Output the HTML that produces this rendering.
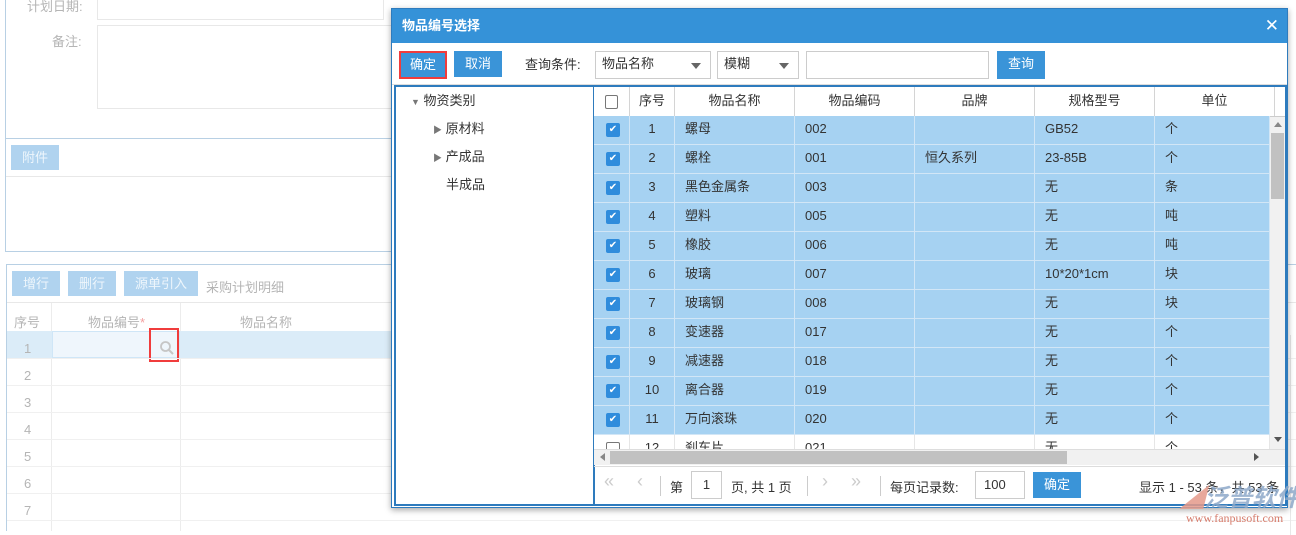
<!DOCTYPE html>
<html><head><meta charset="utf-8"><style>
*{box-sizing:border-box;margin:0;padding:0}
body{width:1296px;height:531px;overflow:hidden;background:#fff;font-family:"Liberation Sans","Noto Sans CJK SC",sans-serif;font-size:13px;color:#333;position:relative}
.a{position:absolute}
.fb{background:#b0d3ef;color:#eef6fc;font-size:13px;text-align:center;line-height:25px}
.lg{color:#b5b5b5}
.hd{position:absolute;top:0;height:29px;line-height:27px;text-align:center;border-right:1px solid #d4d4d4;color:#333}
.row{position:absolute;left:0;width:676px;height:29px;background:#a6d2f2;border-bottom:1px solid #d2e6f6}
.row div{position:absolute;top:0;height:28px;line-height:26px;border-right:1px solid #d2e6f6}
.cb{position:absolute;left:12px;top:7px;width:14px;height:14px;background:#2f8cdc;border-radius:2px;color:#fff;font-size:10px;line-height:14px;text-align:center;font-style:normal}
.btn{position:absolute;background:#3a94d8;color:#fff;text-align:center;line-height:26px;height:26px}
.sel{position:absolute;height:28px;border:1px solid #ccc;background:#fff;line-height:24px;padding-left:6px}
.sel:after{content:"";position:absolute;right:9px;top:11px;border-left:5px solid transparent;border-right:5px solid transparent;border-top:6px solid #666}
</style></head><body>
<div class="a lg" style="left:27px;top:-4px;font-size:13px">计划日期:</div>
<div class="a" style="left:97px;top:-2px;width:287px;height:22px;border:1px solid #e8e8e8"></div>
<div class="a lg" style="left:52px;top:31px">备注:</div>
<div class="a" style="left:97px;top:25px;width:300px;height:84px;border:1px solid #e8e8e8"></div>
<div class="a" style="left:5px;top:0;width:400px;height:252px;border-left:1px solid #b8d0e4;border-bottom:1px solid #b8d0e4"></div>
<div class="a" style="left:5px;top:138px;width:400px;border-top:1px solid #b8d0e4"></div>
<div class="a fb" style="left:11px;top:145px;width:48px">附件</div>
<div class="a" style="left:6px;top:176px;width:400px;border-top:1px solid #e8e8e8"></div>
<div class="a" style="left:6px;top:264px;width:1290px;height:267px;border-top:1px solid #b8d0e4;border-left:1px solid #b8d0e4"></div>
<div class="a fb" style="left:12px;top:271px;width:48px">增行</div>
<div class="a fb" style="left:68px;top:271px;width:48px">删行</div>
<div class="a fb" style="left:124px;top:271px;width:74px">源单引入</div>
<div class="a lg" style="left:206px;top:277px">采购计划明细</div>
<div class="a" style="left:7px;top:302px;width:1290px;border-top:1px solid #e8e8e8"></div>
<div class="a lg" style="left:14px;top:312px">序号</div>
<div class="a lg" style="left:88px;top:312px">物品编号<span style="color:#f3a0a0">*</span></div>
<div class="a lg" style="left:240px;top:312px">物品名称</div>
<div class="a" style="left:51px;top:303px;height:228px;border-left:1px solid #ececec"></div>
<div class="a" style="left:180px;top:303px;height:228px;border-left:1px solid #ececec"></div>
<div class="a" style="left:7px;top:331px;width:390px;height:27px;background:#dbecf8"></div>
<div class="a" style="left:52px;top:331px;width:128px;height:27px;background:#eff6fc;border:1px solid #cfe6f7"></div>
<div class="a" style="left:149px;top:328px;width:30px;height:34px;border:2px solid #f03c3c"></div>
<svg class="a" style="left:159px;top:340px" width="16" height="16"><circle cx="6.5" cy="6.5" r="4.5" fill="none" stroke="#c6c6c6" stroke-width="1.8"/><line x1="10" y1="10" x2="14" y2="14" stroke="#c6c6c6" stroke-width="2"/></svg>
<div class="a lg" style="left:24px;top:341px">1</div>
<div class="a lg" style="left:24px;top:368px">2</div>
<div class="a lg" style="left:24px;top:395px">3</div>
<div class="a lg" style="left:24px;top:422px">4</div>
<div class="a lg" style="left:24px;top:449px">5</div>
<div class="a lg" style="left:24px;top:476px">6</div>
<div class="a lg" style="left:24px;top:503px">7</div>
<div class="a" style="left:7px;top:358px;width:1290px;border-top:1px solid #f0f0f0"></div>
<div class="a" style="left:7px;top:385px;width:1290px;border-top:1px solid #f0f0f0"></div>
<div class="a" style="left:7px;top:412px;width:1290px;border-top:1px solid #f0f0f0"></div>
<div class="a" style="left:7px;top:439px;width:1290px;border-top:1px solid #f0f0f0"></div>
<div class="a" style="left:7px;top:466px;width:1290px;border-top:1px solid #f0f0f0"></div>
<div class="a" style="left:7px;top:493px;width:1290px;border-top:1px solid #f0f0f0"></div>
<div class="a" style="left:7px;top:520px;width:1290px;border-top:1px solid #f0f0f0"></div>
<div class="a" style="left:1290px;top:335px;height:200px;border-left:1px solid #e8e8e8"></div>

<div class="a" style="left:391px;top:8px;width:897px;height:500px;background:#fff;border:1px solid #2e7bbd;box-shadow:0 2px 6px rgba(0,0,0,.35)">
 <div class="a" style="left:0;top:0;width:895px;height:34px;background:#3592d8;color:#fff;font-weight:bold;line-height:33px;padding-left:10px;font-size:13px">物品编号选择<span style="position:absolute;right:8px;top:0;font-weight:normal;font-size:17px">✕</span></div>
 <div class="btn" style="left:7px;top:42px;width:48px;height:28px;border:2px solid #f03c3c;line-height:24px">确定</div>
 <div class="btn" style="left:62px;top:42px;width:48px">取消</div>
 <div class="a" style="left:133px;top:45px">查询条件:</div>
 <div class="sel" style="left:203px;top:42px;width:116px">物品名称</div>
 <div class="sel" style="left:325px;top:42px;width:82px">模糊</div>
 <div class="a" style="left:414px;top:42px;width:183px;height:28px;border:1px solid #ccc"></div>
 <div class="btn" style="left:605px;top:42px;width:48px;height:28px;line-height:26px">查询</div>
 <div class="a" style="left:0;top:75px;width:895px;border-top:1px solid #ddd"></div>
 <div class="a" style="left:2px;top:76px;width:201px;height:421px;border:2px solid #2e7bbd"></div>
 <div class="a" style="left:19px;top:81px"><span style="font-size:9px;color:#777">▼</span> 物资类别</div>
 <div class="a" style="left:41px;top:109px"><span style="font-size:9px;color:#777">▶</span> 原材料</div>
 <div class="a" style="left:41px;top:137px"><span style="font-size:9px;color:#777">▶</span> 产成品</div>
 <div class="a" style="left:54px;top:165px">半成品</div>
 <div class="a" style="left:202px;top:76px;width:693px;height:421px;border:2px solid #2e7bbd;border-left:none;overflow:hidden">
  <div class="a" style="left:0;top:0;width:693px;height:30px;border-bottom:1px solid #ccc;background:#fff">
   <div class="hd" style="left:0;width:36px"><span style="display:inline-block;width:13px;height:14px;border:1px solid #777;border-radius:2px;vertical-align:middle"></span></div>
   <div class="hd" style="left:36px;width:45px">序号</div>
   <div class="hd" style="left:81px;width:120px">物品名称</div>
   <div class="hd" style="left:201px;width:120px">物品编码</div>
   <div class="hd" style="left:321px;width:120px">品牌</div>
   <div class="hd" style="left:441px;width:120px">规格型号</div>
   <div class="hd" style="left:561px;width:120px">单位</div>
  </div>
  <div class="a" style="left:0;top:29px;width:676px;height:334px;overflow:hidden">
   <div class="row" style="top:0"><i class="cb">✔</i><div style="left:0;width:36px"></div><div style="left:36px;width:45px;text-align:center">1</div><div style="left:81px;width:120px;padding-left:10px">螺母</div><div style="left:201px;width:120px;padding-left:10px">002</div><div style="left:321px;width:120px;padding-left:10px"></div><div style="left:441px;width:120px;padding-left:10px">GB52</div><div style="left:561px;width:115px;padding-left:10px">个</div></div>
   <div class="row" style="top:29px"><i class="cb">✔</i><div style="left:0;width:36px"></div><div style="left:36px;width:45px;text-align:center">2</div><div style="left:81px;width:120px;padding-left:10px">螺栓</div><div style="left:201px;width:120px;padding-left:10px">001</div><div style="left:321px;width:120px;padding-left:10px">恒久系列</div><div style="left:441px;width:120px;padding-left:10px">23-85B</div><div style="left:561px;width:115px;padding-left:10px">个</div></div>
   <div class="row" style="top:58px"><i class="cb">✔</i><div style="left:0;width:36px"></div><div style="left:36px;width:45px;text-align:center">3</div><div style="left:81px;width:120px;padding-left:10px">黑色金属条</div><div style="left:201px;width:120px;padding-left:10px">003</div><div style="left:321px;width:120px"></div><div style="left:441px;width:120px;padding-left:10px">无</div><div style="left:561px;width:115px;padding-left:10px">条</div></div>
   <div class="row" style="top:87px"><i class="cb">✔</i><div style="left:0;width:36px"></div><div style="left:36px;width:45px;text-align:center">4</div><div style="left:81px;width:120px;padding-left:10px">塑料</div><div style="left:201px;width:120px;padding-left:10px">005</div><div style="left:321px;width:120px"></div><div style="left:441px;width:120px;padding-left:10px">无</div><div style="left:561px;width:115px;padding-left:10px">吨</div></div>
   <div class="row" style="top:116px"><i class="cb">✔</i><div style="left:0;width:36px"></div><div style="left:36px;width:45px;text-align:center">5</div><div style="left:81px;width:120px;padding-left:10px">橡胶</div><div style="left:201px;width:120px;padding-left:10px">006</div><div style="left:321px;width:120px"></div><div style="left:441px;width:120px;padding-left:10px">无</div><div style="left:561px;width:115px;padding-left:10px">吨</div></div>
   <div class="row" style="top:145px"><i class="cb">✔</i><div style="left:0;width:36px"></div><div style="left:36px;width:45px;text-align:center">6</div><div style="left:81px;width:120px;padding-left:10px">玻璃</div><div style="left:201px;width:120px;padding-left:10px">007</div><div style="left:321px;width:120px"></div><div style="left:441px;width:120px;padding-left:10px">10*20*1cm</div><div style="left:561px;width:115px;padding-left:10px">块</div></div>
   <div class="row" style="top:174px"><i class="cb">✔</i><div style="left:0;width:36px"></div><div style="left:36px;width:45px;text-align:center">7</div><div style="left:81px;width:120px;padding-left:10px">玻璃钢</div><div style="left:201px;width:120px;padding-left:10px">008</div><div style="left:321px;width:120px"></div><div style="left:441px;width:120px;padding-left:10px">无</div><div style="left:561px;width:115px;padding-left:10px">块</div></div>
   <div class="row" style="top:203px"><i class="cb">✔</i><div style="left:0;width:36px"></div><div style="left:36px;width:45px;text-align:center">8</div><div style="left:81px;width:120px;padding-left:10px">变速器</div><div style="left:201px;width:120px;padding-left:10px">017</div><div style="left:321px;width:120px"></div><div style="left:441px;width:120px;padding-left:10px">无</div><div style="left:561px;width:115px;padding-left:10px">个</div></div>
   <div class="row" style="top:232px"><i class="cb">✔</i><div style="left:0;width:36px"></div><div style="left:36px;width:45px;text-align:center">9</div><div style="left:81px;width:120px;padding-left:10px">减速器</div><div style="left:201px;width:120px;padding-left:10px">018</div><div style="left:321px;width:120px"></div><div style="left:441px;width:120px;padding-left:10px">无</div><div style="left:561px;width:115px;padding-left:10px">个</div></div>
   <div class="row" style="top:261px"><i class="cb">✔</i><div style="left:0;width:36px"></div><div style="left:36px;width:45px;text-align:center">10</div><div style="left:81px;width:120px;padding-left:10px">离合器</div><div style="left:201px;width:120px;padding-left:10px">019</div><div style="left:321px;width:120px"></div><div style="left:441px;width:120px;padding-left:10px">无</div><div style="left:561px;width:115px;padding-left:10px">个</div></div>
   <div class="row" style="top:290px"><i class="cb">✔</i><div style="left:0;width:36px"></div><div style="left:36px;width:45px;text-align:center">11</div><div style="left:81px;width:120px;padding-left:10px">万向滚珠</div><div style="left:201px;width:120px;padding-left:10px">020</div><div style="left:321px;width:120px"></div><div style="left:441px;width:120px;padding-left:10px">无</div><div style="left:561px;width:115px;padding-left:10px">个</div></div>
   <div class="row" style="top:319px;background:#fff;border-bottom-color:#e6e6e6"><i class="cb" style="background:#fff;border:1px solid #777"></i><div style="left:0;width:36px;border-color:#e6e6e6"></div><div style="left:36px;width:45px;text-align:center;border-color:#e6e6e6">12</div><div style="left:81px;width:120px;padding-left:10px;border-color:#e6e6e6">刹车片</div><div style="left:201px;width:120px;padding-left:10px;border-color:#e6e6e6">021</div><div style="left:321px;width:120px;border-color:#e6e6e6"></div><div style="left:441px;width:120px;padding-left:10px;border-color:#e6e6e6">无</div><div style="left:561px;width:115px;padding-left:10px;border-color:#e6e6e6">个</div></div>
  </div>
  <div class="a" style="left:676px;top:30px;width:15px;height:334px;background:#f1f1f1">
   <div class="a" style="left:4px;top:5px;border-left:4px solid transparent;border-right:4px solid transparent;border-bottom:5px solid #888"></div>
   <div class="a" style="left:1px;top:16px;width:13px;height:66px;background:#c1c1c1"></div>
   <div class="a" style="left:4px;top:320px;border-left:4px solid transparent;border-right:4px solid transparent;border-top:5px solid #555"></div>
  </div>
  <div class="a" style="left:0;top:362px;width:693px;height:16px;background:#f1f1f1;border-top:1px solid #ddd">
   <div class="a" style="left:6px;top:3px;border-top:4px solid transparent;border-bottom:4px solid transparent;border-right:5px solid #888"></div>
   <div class="a" style="left:16px;top:1px;width:457px;height:13px;background:#c1c1c1"></div>
   <div class="a" style="left:660px;top:3px;border-top:4px solid transparent;border-bottom:4px solid transparent;border-left:5px solid #555"></div>
  </div>
  <div class="a" style="left:0;top:379px;width:693px;border-top:1px solid #ddd"></div>
  <div class="a" style="left:10px;top:384px;color:#ccc;font-size:18px">«</div>
  <div class="a" style="left:43px;top:384px;color:#ccc;font-size:18px">‹</div>
  <div class="a" style="left:66px;top:389px;height:20px;border-left:1px solid #ccc"></div>
  <div class="a" style="left:76px;top:390px">第</div>
  <div class="a" style="left:97px;top:384px;width:31px;height:28px;border:1px solid #ccc;text-align:center;line-height:26px">1</div>
  <div class="a" style="left:137px;top:390px">页, 共 1 页</div>
  <div class="a" style="left:213px;top:389px;height:20px;border-left:1px solid #ccc"></div>
  <div class="a" style="left:228px;top:384px;color:#ccc;font-size:18px">›</div>
  <div class="a" style="left:257px;top:384px;color:#ccc;font-size:18px">»</div>
  <div class="a" style="left:286px;top:389px;height:20px;border-left:1px solid #ccc"></div>
  <div class="a" style="left:296px;top:390px">每页记录数:</div>
  <div class="a" style="left:381px;top:384px;height:28px;border:1px solid #ccc;line-height:26px;padding-left:8px;width:50px">100</div>
  <div class="btn" style="left:439px;top:385px;width:48px">确定</div>
  <div class="a" style="left:545px;top:390px">显示 1 - 53 条，共 53 条</div>
 </div>
</div>
<div class="a" style="left:1180px;top:478px;color:#8ea9c9;font-size:24px;font-weight:bold;font-style:italic;opacity:.85;white-space:nowrap"><span style="color:#e59a8a">◢</span>泛普软件</div>
<div class="a" style="left:1186px;top:511px;color:#d57a6a;font-size:12px;font-family:'Liberation Serif',serif;white-space:nowrap">www.fanpusoft.com</div>
</body></html>
